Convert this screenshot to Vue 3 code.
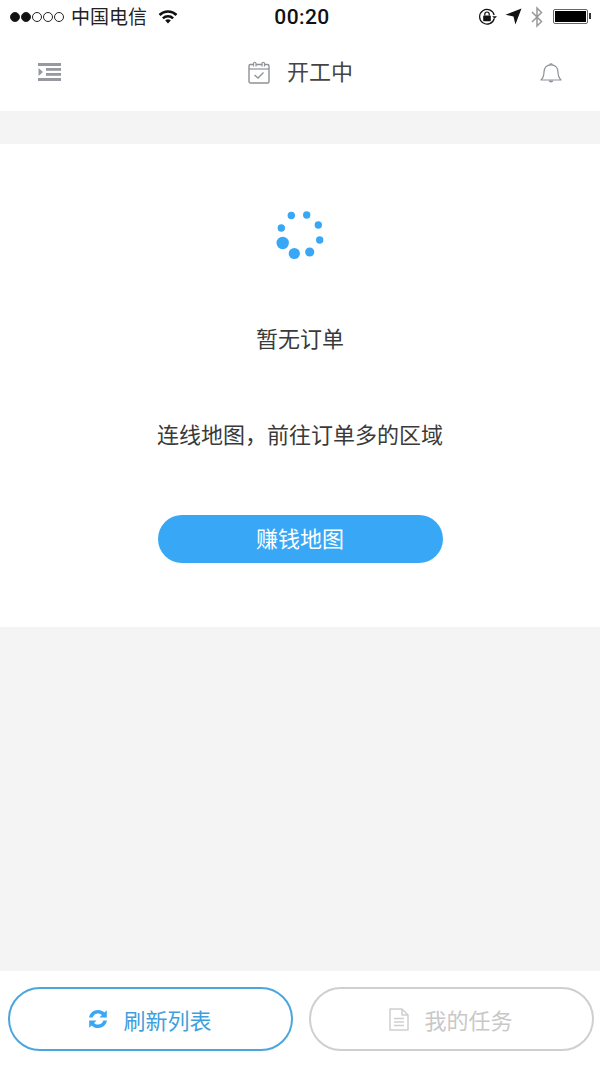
<template>
  <div class="page">
    <!-- Status bar -->
    <div class="status-bar">
      <div class="status-left">
        <span class="signal">
          <i class="dot full"></i><i class="dot full"></i><i class="dot"></i><i class="dot"></i><i class="dot"></i>
        </span>
        <span class="carrier">中国电信</span>
        <svg class="wifi" width="20" height="15" viewBox="0 0 20 15">
          <path d="M0.6 5 A13.5 13.5 0 0 1 19.4 5 L17.6 6.9 A11 11 0 0 0 2.4 6.9 Z" fill="#111" />
          <path d="M4 8.4 A8.6 8.6 0 0 1 16 8.4 L14.2 10.2 A6 6 0 0 0 5.8 10.2 Z" fill="#111" />
          <path d="M7.2 11.6 A4 4 0 0 1 12.8 11.6 L10 14.6 Z" fill="#111" />
        </svg>
      </div>
      <div class="status-time">00:20</div>
      <div class="status-right">
        <svg width="20" height="18" viewBox="0 0 20 18">
          <path d="M16.2 10.5 A7.4 7.4 0 1 1 16.2 7" fill="none" stroke="#111" stroke-width="1.2" />
          <path d="M14.2 8.2 H19 L16.6 10.8 Z" fill="#111" />
          <rect x="5.2" y="7.6" width="7.6" height="5.6" rx="0.8" fill="#111" />
          <path d="M6.8 7.6 V6.2 A2.2 2.2 0 0 1 11.2 6.2 V7.6" fill="none" stroke="#111" stroke-width="1.2" />
        </svg>
        <svg class="arrow" width="17" height="17" viewBox="0 0 16 16">
          <path d="M15.5 0.5 L9.8 15.5 L8 8 L0.5 6.4 Z" fill="#111" />
        </svg>
        <svg class="bt" width="14" height="22" viewBox="0 0 14 22">
          <path d="M2 6 L11.5 15.5 L7 20 V2 L11.5 6.5 L2 16" fill="none" stroke="#999" stroke-width="1.5" />
        </svg>
        <div class="battery"><div class="battery-fill"></div></div>
      </div>
    </div>

    <!-- Header -->
    <div class="header">
      <svg width="24" height="18" viewBox="0 0 24 18">
        <rect x="0" y="0" width="23" height="3" fill="#96999f" />
        <rect x="8" y="5" width="15" height="2.8" fill="#96999f" />
        <rect x="8" y="10" width="15" height="2.8" fill="#96999f" />
        <rect x="0" y="15" width="23" height="3" fill="#96999f" />
        <path d="M0.5 5 L5 9 L0.5 13 Z" fill="#96999f" />
      </svg>
      <div class="header-title">
        <svg width="22" height="23" viewBox="0 0 22 23">
          <rect x="1" y="3.5" width="20" height="18.5" rx="1.5" fill="none" stroke="#8e9197" stroke-width="1.4" />
          <path d="M1 8 H21" stroke="#8e9197" stroke-width="1.2" />
          <path d="M5.5 5.5 V2.5 A1.2 1.2 0 0 1 8 2.5 V5.5 M14 5.5 V2.5 A1.2 1.2 0 0 1 16.5 2.5 V5.5" fill="#fff" stroke="#8e9197" stroke-width="1.2" />
          <path d="M6.5 14 L10 17 L15.5 11.5" fill="none" stroke="#8e9197" stroke-width="1.3" />
        </svg>
        <span>开工中</span>
      </div>
      <svg width="22" height="23" viewBox="0 0 22 23">
        <path d="M1 19 C3.5 16.5 4 14.5 4 11 C4 7 6.5 3.8 11 3.8 C15.5 3.8 18 7 18 11 C18 14.5 18.5 16.5 21 19 Z" fill="none" stroke="#8e9197" stroke-width="1.2" stroke-linejoin="round" />
        <path d="M9.6 3.8 A1.5 1.5 0 0 1 12.4 3.8" fill="none" stroke="#8e9197" stroke-width="1.2" />
        <path d="M8.5 19.5 A2.6 2.6 0 0 0 13.5 19.5 Z" fill="#8e9197" />
      </svg>
    </div>

    <!-- Empty state card -->
    <div class="card">
      <svg class="spinner" width="50" height="52" viewBox="0 0 50 52">
        <circle v-for="(d, i) in dots" :key="i" :cx="d.x" :cy="d.y" :r="d.r" fill="#38a8f6" />
      </svg>
      <p class="empty-title">暂无订单</p>
      <p class="empty-hint">连线地图&#xFF0C;前往订单多的区域</p>
      <button class="map-button">赚钱地图</button>
    </div>

    <div class="filler"></div>

    <!-- Bottom actions -->
    <div class="footer">
      <button class="action primary">
        <svg width="20" height="20" viewBox="0 0 20 20">
          <path d="M1 8.5 C1.8 4 5.4 1 10 1 C12.6 1 14.8 2 16.4 3.6 L18.8 1.2 V8.5 H11.5 L13.9 6.1 C12.9 5 11.5 4.4 10 4.4 C7.5 4.4 5.4 6 4.7 8.5 Z" fill="#38a8f6" />
          <path d="M19 11.5 C18.2 16 14.6 19 10 19 C7.4 19 5.2 18 3.6 16.4 L1.2 18.8 V11.5 H8.5 L6.1 13.9 C7.1 15 8.5 15.6 10 15.6 C12.5 15.6 14.6 14 15.3 11.5 Z" fill="#38a8f6" />
        </svg>
        <span>刷新列表</span>
      </button>
      <button class="action disabled">
        <svg width="20" height="23" viewBox="0 0 20 23">
          <path d="M1 1 H13 L19 7 V22 H1 Z M13 1 V7 H19" fill="none" stroke="#cfcfcf" stroke-width="1.5" stroke-linejoin="round" />
          <path d="M5 10.5 H15 M5 14 H15 M5 17.5 H15" stroke="#cfcfcf" stroke-width="1.3" />
        </svg>
        <span>我的任务</span>
      </button>
    </div>
  </div>
</template>

<script setup>
// spinner dots, measured clockwise from the big one
const dots = [
  { x: 7.7, y: 33, r: 6.2 },
  { x: 19.3, y: 43.5, r: 5.6 },
  { x: 34.7, y: 42, r: 4.6 },
  { x: 44.7, y: 30, r: 3.7 },
  { x: 43.3, y: 15, r: 3.7 },
  { x: 31.7, y: 5, r: 3.7 },
  { x: 16.3, y: 5.5, r: 3.7 },
  { x: 6.3, y: 18, r: 3.7 }
]
</script>

<style scoped>
.page {
  width: 600px;
  height: 1067px;
  display: flex;
  flex-direction: column;
  background: #f4f4f4;
  font-family: "Noto Sans CJK SC", "Liberation Sans", sans-serif;
  font-weight: 400;
  overflow: hidden;
}

.status-bar {
  height: 33px;
  padding: 0 12px 0 10px;
  display: flex;
  align-items: center;
  justify-content: space-between;
  position: relative;
  background: #fff;
  color: #111;
}

.status-left,
.status-right {
  display: flex;
  align-items: center;
}

.signal {
  display: flex;
  gap: 1px;
}

.dot {
  width: 10px;
  height: 10px;
  border: 1px solid #222;
  border-radius: 50%;
  box-sizing: border-box;
}

.dot.full {
  background: #111;
}

.carrier {
  margin-left: 7px;
  font-size: 19px;
  line-height: 31px;
  padding-bottom: 2px;
  color: #222;
}

.wifi {
  margin-left: 11px;
}

.status-time {
  position: absolute;
  left: 4px;
  right: 0;
  text-align: center;
  font-family: Roboto, sans-serif;
  font-size: 21px;
  font-weight: 500;
  letter-spacing: 0.4px;
}

.arrow {
  margin-left: 7px;
}

.bt {
  margin-left: 8px;
}

.battery {
  width: 35px;
  height: 15px;
  margin-left: 9px;
  border: 1px solid #666;
  border-radius: 2px;
  padding: 1px;
  box-sizing: border-box;
  position: relative;
}

.battery::after {
  content: "";
  position: absolute;
  right: -4px;
  top: 3px;
  width: 2px;
  height: 6px;
  background: #333;
}

.battery-fill {
  height: 100%;
  background: #000;
}

.header {
  height: 78px;
  padding: 0 38px;
  display: flex;
  align-items: center;
  justify-content: space-between;
  background: #fff;
}

.header-title {
  display: flex;
  align-items: center;
  gap: 17px;
  margin-right: 1px;
  font-size: 22px;
  color: #444;
}

.header-title span {
  line-height: 26px;
  margin-bottom: 4px;
}

.card {
  margin-top: 33px;
  height: 483px;
  background: #fff;
  display: flex;
  flex-direction: column;
  align-items: center;
}

.spinner {
  margin-top: 66px;
}

.empty-title,
.empty-hint {
  margin: 0;
  font-size: 22px;
  line-height: 32px;
  color: #3a3a3a;
}

.empty-title {
  margin-top: 59px;
}

.empty-hint {
  margin-top: 64px;
}

.map-button {
  margin-top: 66px;
  width: 285px;
  height: 48px;
  border: none;
  border-radius: 24px;
  background: #38a8f6;
  color: #fff;
  font: inherit;
  font-size: 22px;
  padding: 0 0 4px;
}

.filler {
  flex: 1;
}

.footer {
  height: 96px;
  padding: 16px 6px 16px 8px;
  box-sizing: border-box;
  display: flex;
  gap: 16px;
  background: #fff;
}

.action {
  flex: 1;
  height: 64px;
  border-radius: 32px;
  background: #fff;
  font: inherit;
  font-size: 22px;
  display: flex;
  align-items: center;
  justify-content: center;
  gap: 15px;
  padding: 0 1px 0 0;
  box-sizing: border-box;
}

.action.primary {
  border: 2px solid #4ba6dc;
  color: #3f9fdc;
}

.action.disabled {
  border: 2px solid #cfcfcf;
  color: #c8c8c8;
}
</style>
